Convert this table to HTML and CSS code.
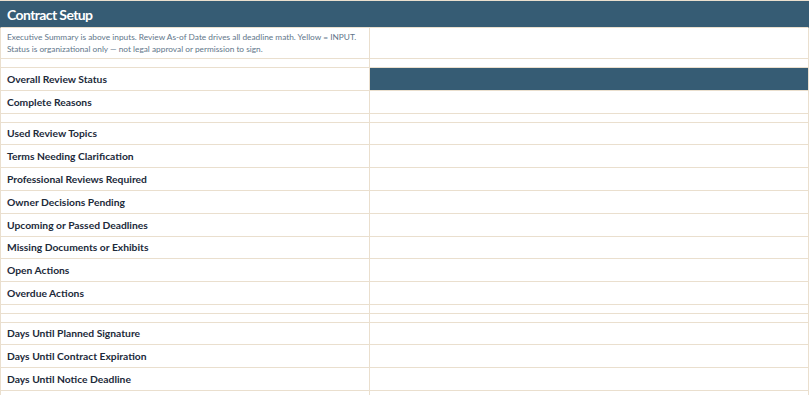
FILE: index.html
```html
<!DOCTYPE html>
<html>
<head>
<meta charset="utf-8">
<link rel="stylesheet" href="styles.css">
</head>
<body>
<div class="sheet">
  <div class="row h-head"><div class="cell span title">Contract Setup</div></div>
  <div class="row h-exec"><div class="cell note">Executive Summary is above inputs. Review As-of Date drives all deadline math. Yellow = INPUT.<br>Status is organizational only — not legal approval or permission to sign.</div><div class="cell"></div></div>
  <div class="row h-gap"><div class="cell"></div><div class="cell"></div></div>
  <div class="row h-23"><div class="cell label">Overall Review Status</div><div class="cell dark"></div></div>
  <div class="row h-23"><div class="cell label">Complete Reasons</div><div class="cell"></div></div>
  <div class="row h-gap"><div class="cell"></div><div class="cell"></div></div>
  <div class="row h-22"><div class="cell label">Used Review Topics</div><div class="cell"></div></div>
  <div class="row h-23"><div class="cell label">Terms Needing Clarification</div><div class="cell"></div></div>
  <div class="row h-23"><div class="cell label">Professional Reviews Required</div><div class="cell"></div></div>
  <div class="row h-23"><div class="cell label">Owner Decisions Pending</div><div class="cell"></div></div>
  <div class="row h-23"><div class="cell label">Upcoming or Passed Deadlines</div><div class="cell"></div></div>
  <div class="row h-22"><div class="cell label">Missing Documents or Exhibits</div><div class="cell"></div></div>
  <div class="row h-23"><div class="cell label">Open Actions</div><div class="cell"></div></div>
  <div class="row h-23"><div class="cell label">Overdue Actions</div><div class="cell"></div></div>
  <div class="row h-gap"><div class="cell"></div><div class="cell"></div></div>
  <div class="row h-gap"><div class="cell"></div><div class="cell"></div></div>
  <div class="row h-22"><div class="cell label">Days Until Planned Signature</div><div class="cell"></div></div>
  <div class="row h-23"><div class="cell label">Days Until Contract Expiration</div><div class="cell"></div></div>
  <div class="row h-23"><div class="cell label">Days Until Notice Deadline</div><div class="cell"></div></div>
  <div class="row h-23"><div class="cell label"></div><div class="cell"></div></div>
</div>
</body>
</html>
```
FILE: styles.css
```css
html, body {
  margin: 0;
  padding: 0;
  background: #ffffff;
}
body {
  font-family: Lato, "Open Sans", sans-serif;
  color: #1c2a3a;
  overflow: hidden;
}
.sheet {
  width: 809px;
  border-top: 1px solid #eadfce;
  box-sizing: border-box;
}
.row {
  display: grid;
  grid-template-columns: 370px 439px;
  box-sizing: border-box;
}
.cell {
  border-bottom: 1px solid #eadfce;
  border-right: 1px solid #eadfce;
  box-sizing: border-box;
  display: flex;
  align-items: center;
  padding-left: 7px;
}
.row > .cell:first-child {
  border-left: 1px solid #eadfce;
  padding-left: 6px;
}
.span {
  grid-column: 1 / span 2;
}
.h-head { height: 27px; }
.h-exec { height: 31px; }
.h-gap { height: 9px; }
.h-22 { height: 22px; }
.h-23 { height: 23px; }
.title {
  background: #365c74;
  color: #ffffff;
  font-weight: 700;
  font-size: 14px;
  letter-spacing: -0.6px;
  border-color: #365c74;
  border-bottom-color: #eadfce;
}
.row > .title:first-child {
  border-left-color: #365c74;
}
.note {
  font-size: 8.3px;
  line-height: 12px;
  color: #62768a;
  white-space: nowrap;
}
.label {
  font-weight: 700;
  font-size: 10.3px;
  padding-bottom: 1px;
}
.dark {
  background: #365c74;
}
```
